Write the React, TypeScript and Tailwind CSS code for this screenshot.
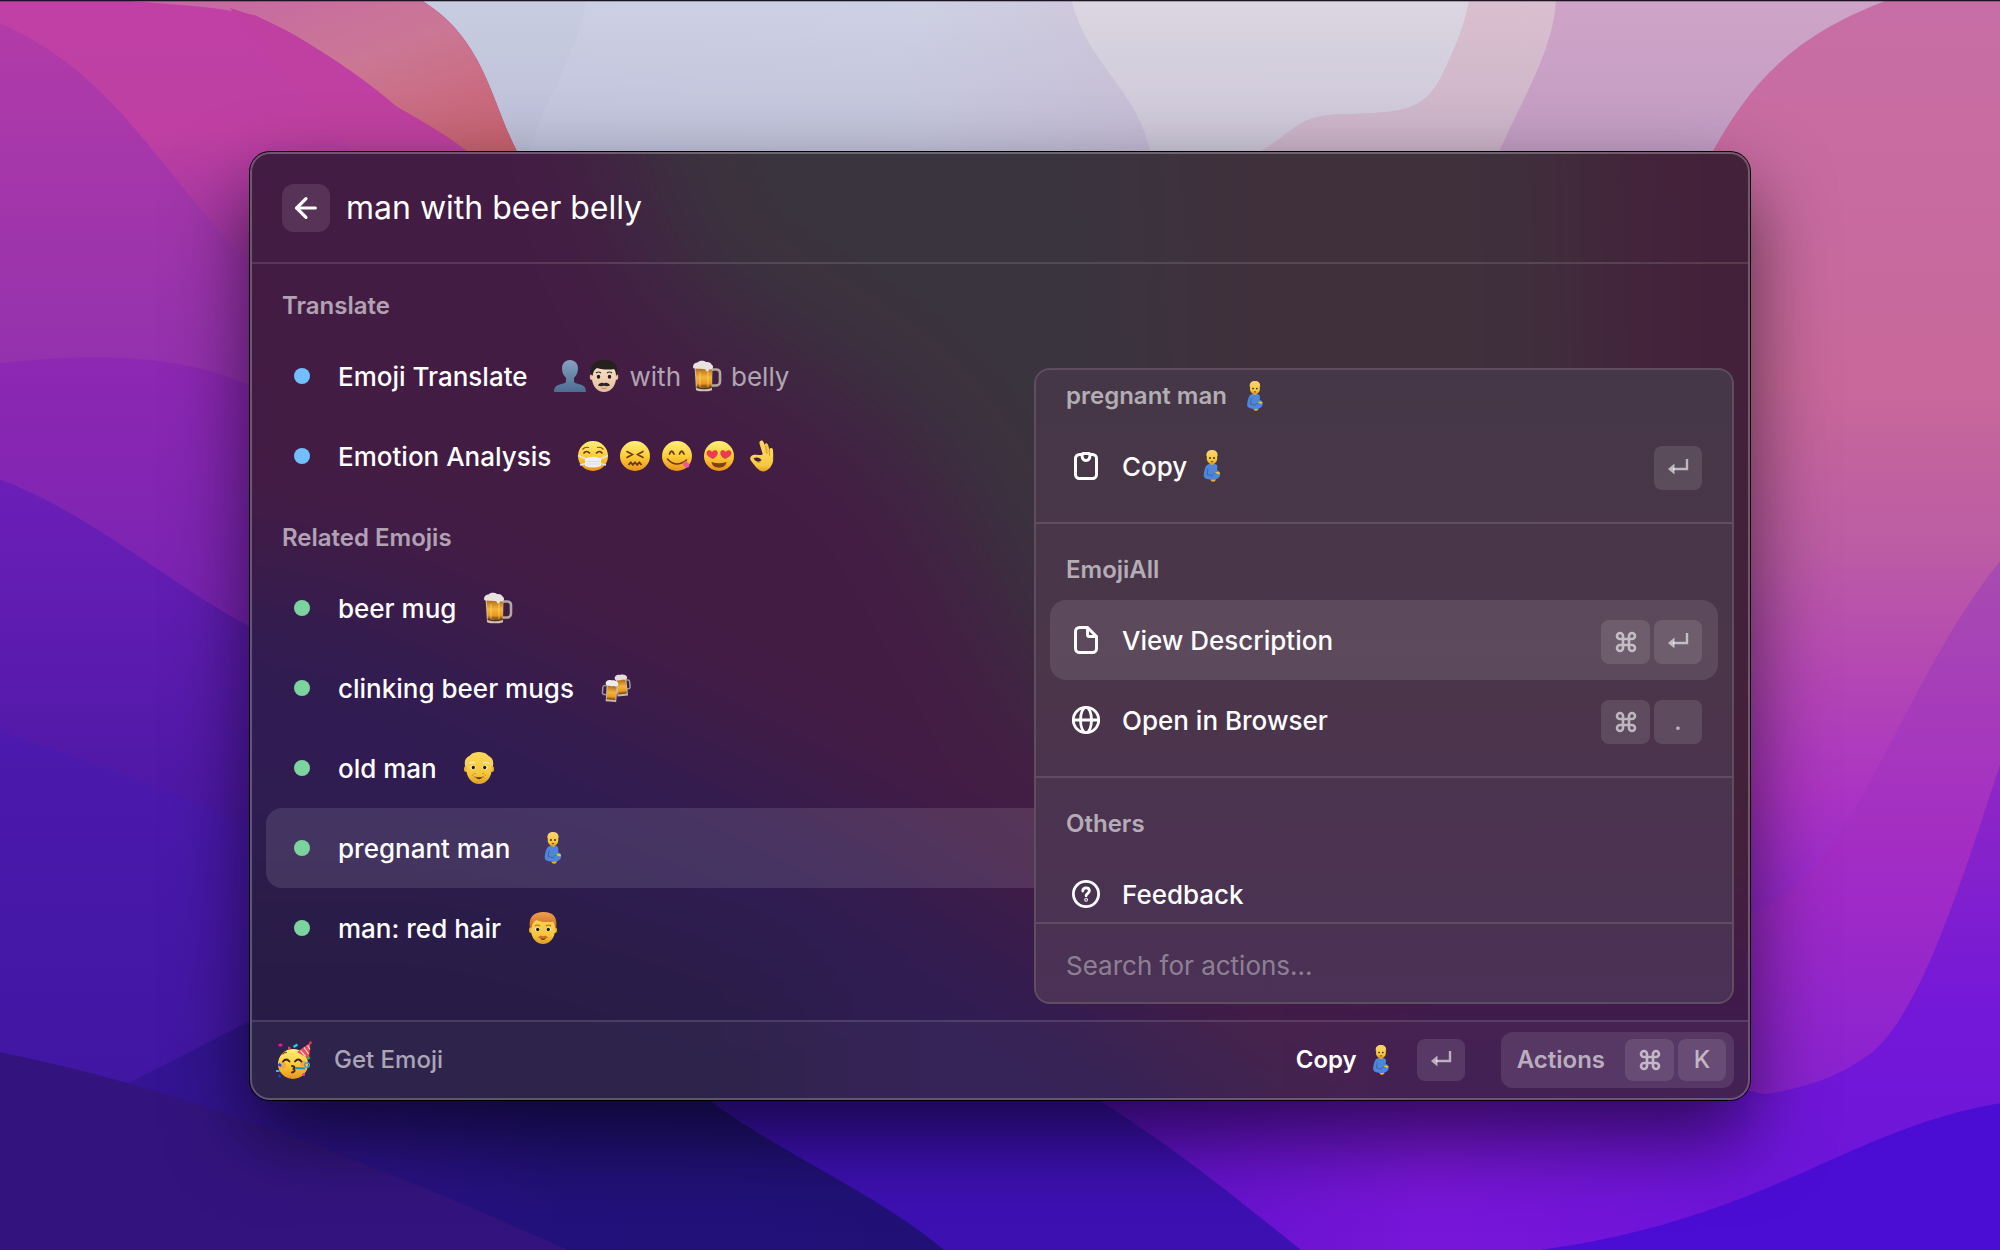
import { useState } from 'react';
import type { ReactNode } from 'react';
import { ArrowLeft, Command } from 'lucide-react';

/* ---------- Emojis ---------- */

type EmojiProps = { className?: string };

const EMOJI = 'w-8 h-8 shrink-0';

function Gradients() {
  return (
    <svg className="absolute w-0 h-0" aria-hidden="true">
      <defs>
        <linearGradient id="face" x1="0" y1="0" x2="0" y2="1">
          <stop offset="0" stopColor="#fff07a" />
          <stop offset="0.55" stopColor="#fcc935" />
          <stop offset="1" stopColor="#e8921c" />
        </linearGradient>
        <linearGradient id="skin" x1="0" y1="0" x2="0" y2="1">
          <stop offset="0" stopColor="#fbd95c" />
          <stop offset="0.7" stopColor="#f5c63c" />
          <stop offset="1" stopColor="#dc9c22" />
        </linearGradient>
        <linearGradient id="paleSkin" x1="0" y1="0" x2="0" y2="1">
          <stop offset="0" stopColor="#fbe6d2" />
          <stop offset="1" stopColor="#e6bd9c" />
        </linearGradient>
        <linearGradient id="bust" x1="0" y1="0" x2="0" y2="1">
          <stop offset="0" stopColor="#84a2be" />
          <stop offset="1" stopColor="#4c6c92" />
        </linearGradient>
        <linearGradient id="beer" x1="0" y1="0" x2="0" y2="1">
          <stop offset="0" stopColor="#a8621c" />
          <stop offset="0.5" stopColor="#f4b437" />
          <stop offset="0.8" stopColor="#e8981f" />
          <stop offset="1" stopColor="#6f3a0e" />
        </linearGradient>
        <linearGradient id="ginger" x1="0" y1="0" x2="0" y2="1">
          <stop offset="0" stopColor="#f0a050" />
          <stop offset="1" stopColor="#c96a1e" />
        </linearGradient>
      </defs>
    </svg>
  );
}

function Bust({ className = EMOJI }: EmojiProps) {
  return (
    <svg viewBox="0 0 32 32" className={className} aria-label="bust in silhouette">
      <path d="M16 0c5 0 8 3.600 8 8.500 0 4-1.600 7.400-4 9.300v3.400c0 1.600 1.500 2.100 4.500 2.900C29.500 25.400 32 27 32 32H0c0-5 2.500-6.600 7.500-7.900 3-.8 4.500-1.300 4.500-2.900v-3.400c-2.400-1.900-4-5.300-4-9.300C8 3.600 11 0 16 0z" fill="url(#bust)" />
    </svg>
  );
}

function MustacheMan({ className = EMOJI }: EmojiProps) {
  return (
    <svg viewBox="0 0 32 32" className={className} aria-label="man: light skin tone">
      <ellipse cx="3.800" cy="17" rx="2" ry="3" fill="#e9c4a6" />
      <ellipse cx="28.200" cy="17" rx="2" ry="3" fill="#e9c4a6" />
      <path d="M4 11C4 4 9 2 16 2s12 2 12 9v7c0 8-5.500 14-12 14S4 26 4 18z" fill="url(#paleSkin)" />
      <path d="M2.500 14C1.500 5 7 0 16.500 0S30.500 5 29.500 14l-1.500 2c0-3-.5-5-2-7-3 .8-11 1-17-1-2.500 1.500-4 4-4.500 8z" fill="#26201f" />
      <path d="M8 13q2.500-2 5 0M19 13q2.500-2 5 0" stroke="#3b2a22" strokeWidth="1.200" fill="none" />
      <ellipse cx="10.500" cy="16.800" rx="1.700" ry="2" fill="#211a18" />
      <ellipse cx="21.500" cy="16.800" rx="1.700" ry="2" fill="#211a18" />
      <path d="M10 25.500c1-2.500 4-3.500 6-2.200 2-1.300 5-.3 6 2.200-2 1-4.200.8-6 .3-1.800.5-4 .7-6-.3z" fill="#2c2423" />
      <path d="M13.500 28q2.500 1 5 0" stroke="#b98468" strokeWidth="1" fill="none" />
    </svg>
  );
}

function BeerMug({ className = EMOJI }: EmojiProps) {
  return (
    <svg viewBox="0 0 32 32" className={className} aria-label="beer mug">
      <path d="M21 9.500h4.500a3.500 3.500 0 0 1 3.500 3.500v8.500a4 4 0 0 1-4 4h-4" fill="none" stroke="#b3a89d" strokeWidth="2.600" />
      <path d="M3.500 6h18l-.5 24c0 1.800-16 1.800-16 0z" fill="#cdbfb2" />
      <path d="M4.500 7h16.500l-.3 19.500c0 1.500-14.900 1.500-14.900 0z" fill="url(#beer)" />
      <path d="M9 12v15M17 11v16" stroke="#ffe08a" strokeWidth="1" opacity="0.600" />
      <path d="M5.500 26.500q7.500 2.500 15.300 0v1.500q-8 2.500-15.300 0z" fill="#5c2f10" />
      <path d="M2 7c0-3 2-4.500 4.500-4.500C8 .3 13 .2 15 2c3-.4 5 .8 5.500 2.500 2 .8 2 3.500.5 4.500-1 .8-2.500.5-3 .2-.5 2.800-3 3-3.500 0C12 9 7 9 4.500 8.500 3 8.500 2 8 2 7z" fill="#e9e2e0" />
    </svg>
  );
}

function BeerMugs({ className = EMOJI }: EmojiProps) {
  return (
    <svg viewBox="0 0 32 32" className={className} aria-label="clinking beer mugs">
      <g transform="rotate(-6 22 14)">
        <path d="M26.500 8.500H28a2 2 0 0 1 2 2v5a2 2 0 0 1-2 2h-1.500" fill="none" stroke="#9d9591" strokeWidth="1.500" />
        <path d="M16.500 6h10.500v18H16.500z" fill="#c9bab0" />
        <path d="M17.500 7h8.500v15h-8.500z" fill="url(#beer)" />
        <path d="M15.500 6c0-3 3.500-4 5.500-3.200 3-.8 7 .6 7 3.200 0 1.700-2.600 2.500-4.500 1.700-2.500.8-8 .8-8-1.700z" fill="#e6dedb" />
      </g>
      <g transform="rotate(5 10 20)">
        <path d="M6 14H4.500a2 2 0 0 0-2 2v5a2 2 0 0 0 2 2H6.500" fill="none" stroke="#9d9591" strokeWidth="1.500" />
        <path d="M6 12h11v17.500H6.500z" fill="#c9bab0" />
        <path d="M7.200 13h8.800v14.500H7.200z" fill="url(#beer)" />
        <path d="M5 12c-.6-3 2.600-4.500 5.400-3.800 3.600-.8 7.900.8 7.100 3.800 0 1.700-2.600 2.500-4.500 1.700-2.600.8-8 .8-8-1.700z" fill="#f0eae8" />
      </g>
    </svg>
  );
}

function MaskFace({ className = EMOJI }: EmojiProps) {
  return (
    <svg viewBox="0 0 32 32" className={className} aria-label="face with medical mask">
      <circle cx="16" cy="16" r="15" fill="url(#face)" />
      <path d="M5.500 9.500Q8 6.500 12 7.500M26.500 9.500Q24 6.500 20 7.500" stroke="#8a5310" strokeWidth="1.200" fill="none" />
      <path d="M6.500 13.500Q9.500 9.500 13 13.500M19 13.500q3.500-4 6.500 0" stroke="#6b3a0a" strokeWidth="1.600" fill="none" />
      <path d="M1 15.500l8 3.500M31 15.500L23 19M3 25l6-1.500M29 25l-6-1.500" stroke="#e4e4ea" strokeWidth="1.500" />
      <path d="M8 18.500q8-3.500 16 0v7.500q-8 3-16 0z" fill="#eef0f6" />
      <path d="M9 21.500h14M9 24h14" stroke="#cdd0da" strokeWidth="0.600" />
    </svg>
  );
}

function ConfoundedFace({ className = EMOJI }: EmojiProps) {
  return (
    <svg viewBox="0 0 32 32" className={className} aria-label="confounded face">
      <circle cx="16" cy="16" r="15" fill="url(#face)" />
      <path d="M8 11.500l5.500 3L8 17.500M24 11.500l-5.500 3 5.500 3" stroke="#6b3a0a" strokeWidth="1.600" fill="none" strokeLinecap="round" />
      <path d="M9.500 25l2.200-2.800 2.100 2.800 2.200-2.800 2.200 2.800 2.100-2.800 2.200 2.800" stroke="#6b3a0a" strokeWidth="1.800" fill="none" strokeLinejoin="round" />
    </svg>
  );
}

function YumFace({ className = EMOJI }: EmojiProps) {
  return (
    <svg viewBox="0 0 32 32" className={className} aria-label="face savoring food">
      <circle cx="16" cy="16" r="15" fill="url(#face)" />
      <path d="M8.500 14q2-5.500 4.500 0M18.500 14q2-5.500 4.500 0" stroke="#6b3a0a" strokeWidth="1.800" fill="none" strokeLinecap="round" />
      <path d="M6.500 19Q15 28.500 25.500 20" stroke="#6b3a0a" strokeWidth="1.600" fill="none" strokeLinecap="round" />
      <path d="M22 22.500q3.500-2 5 .5c2 1.500 2 4-.5 4.500s-5-2-4.500-5z" fill="#f1559b" />
    </svg>
  );
}

function HeartEyesFace({ className = EMOJI }: EmojiProps) {
  return (
    <svg viewBox="0 0 32 32" className={className} aria-label="smiling face with heart-eyes">
      <circle cx="16" cy="16" r="15" fill="url(#face)" />
      <path d="M10 19C5 17 2.500 14 4 11.500c1.300-2 4-1.500 5 .5 1.500-2 4.500-2.500 5.500-.3C15.500 14 13.500 17 10 19z" fill="#ee3b4d" />
      <path d="M22 19c5-2 7.500-5 6-7.500-1.300-2-4-1.500-5 .5-1.500-2-4.500-2.500-5.500-.3-1 2.300 1 5.300 4.500 7.300z" fill="#ee3b4d" />
      <path d="M8.500 22q7.500 2.500 15 0c-.5 3.800-3.700 5.700-7.500 5.700s-7-1.900-7.500-5.700z" fill="#7a4212" />
    </svg>
  );
}

function OkHand({ className = EMOJI }: EmojiProps) {
  return (
    <svg viewBox="0 0 32 32" className={className} aria-label="OK hand">
      <path d="M18 15L14.500 3.500C14 .5 17.500-.5 18.500 2L23.500 14z" fill="#fbd65a" />
      <path d="M20.500 14L19.500 5.500c-.2-2.800 3-3.200 3.600-.6L26.500 16z" fill="#f5c542" />
      <path d="M23.500 15L24.500 9.500c.6-2.200 3.400-1.700 3.500.6.2 4 .6 7.500-.4 11z" fill="#fbd65a" />
      <path d="M16.500 15c3-2.500 8.500-2.500 11 .5 1.200 3 .8 6.500-.8 9.500-1.500 3-4 5.500-7.700 6.500-2.500.3-4.500-1-6-2.500-2.500-2-5-5.500-7.300-8.700C4.200 18 6 15 9 14.800c3-.3 5 .2 7.500.2z" fill="url(#skin)" />
      <path d="M8.500 18.300c3-1.600 6.500-1 8 1.800-2.300 2.800-6 2.100-8-1.800z" fill="#451d44" />
      <path d="M16.500 20q-1 3-4 3" stroke="#d89a22" strokeWidth="1" fill="none" />
      <path d="M20.500 6l1.500 8M24.500 10v6" stroke="#d3921f" strokeWidth="0.800" fill="none" />
    </svg>
  );
}

function OldMan({ className = EMOJI }: EmojiProps) {
  return (
    <svg viewBox="0 0 32 32" className={className} aria-label="old man">
      <path d="M3 17C0 9 3 5 7 4l-2 10zM29 17c3-8 0-12-4-13l2 10z" fill="#f0d078" />
      <ellipse cx="3" cy="17" rx="2" ry="3" fill="#e9b535" />
      <ellipse cx="29" cy="17" rx="2" ry="3" fill="#e9b535" />
      <path d="M3.500 13C3.500 4 9 0 16 0s12.500 4 12.500 13v5c0 8-6 14-12.500 14S3.500 26 3.500 18z" fill="url(#skin)" />
      <path d="M6 11.500q3-2 6-.5M26 11.500q-3-2-6-.5" stroke="#fff0bd" strokeWidth="1.200" fill="none" />
      <ellipse cx="10" cy="15.500" rx="2.600" ry="2" fill="#fff" />
      <ellipse cx="22" cy="15.500" rx="2.600" ry="2" fill="#fff" />
      <circle cx="10.300" cy="15.500" r="1.700" fill="#211a18" />
      <circle cx="21.700" cy="15.500" r="1.700" fill="#211a18" />
      <path d="M9 24q2-3.500 4-2.500M23 24q-2-3.500-4-2.500" stroke="#d29a25" strokeWidth="1" fill="none" />
      <path d="M11 25q5 1.300 10 0" stroke="#a8721a" strokeWidth="1" fill="none" />
      <path d="M13 25.500h6q-.8 1.800-3 1.800t-3-1.800z" fill="#5b2f0c" />
    </svg>
  );
}

function RedHairMan({ className = EMOJI }: EmojiProps) {
  return (
    <svg viewBox="0 0 32 32" className={className} aria-label="man: red hair">
      <ellipse cx="4" cy="18" rx="2" ry="3" fill="#e9b535" />
      <ellipse cx="28" cy="18" rx="2" ry="3" fill="#e9b535" />
      <path d="M4 11C4 4 9 2 16 2s12 2 12 9v7c0 8-5.500 14-12 14S4 26 4 18z" fill="url(#skin)" />
      <path d="M2.800 15C1.500 5 7 0 16.500 0S30.500 5 29.200 15l-1.200 1c0-3-.5-4.500-2-6.500-4 1-11 1-16.500-1.500-3 1.500-4.500 4-5 8z" fill="url(#ginger)" />
      <path d="M8 14q2.500-2 5 0M19 14q2.500-2 5 0" stroke="#b5651d" strokeWidth="1.200" fill="none" />
      <ellipse cx="10.500" cy="17.500" rx="2.300" ry="1.900" fill="#fff" />
      <ellipse cx="21.500" cy="17.500" rx="2.300" ry="1.900" fill="#fff" />
      <circle cx="10.700" cy="17.500" r="1.700" fill="#211a18" />
      <circle cx="21.300" cy="17.500" r="1.700" fill="#211a18" />
      <path d="M11 25.500c1-1.800 3.400-2.200 5-1.200 1.600-1 4-.6 5 1.200-1.800.8-3.400.6-5 .2-1.600.4-3.200.6-5-.2z" fill="#cb6f22" />
      <path d="M13 26.200h6q-1 1.800-3 1.800t-3-1.800z" fill="#6b3a10" />
    </svg>
  );
}

function PregnantMan({ className = EMOJI }: EmojiProps) {
  return (
    <svg viewBox="0 0 32 32" className={className} aria-label="pregnant man">
      <path d="M15.500 29.500c1-1.500 3.500-1.800 5-.8.800 1.200-.3 3-2.300 3-1.500 0-2.700-.7-2.700-2.200z" fill="#e8ab2c" />
      <path d="M12 15c1.500-1 2-1 2.500-1.500h5c.8.800 2.500.8 2.800 2.500.2 1.300 0 2.700-.3 4 2.800 1.300 3.800 3.300 3 5.800-1 3-4.500 4.200-7.500 4-3.300.2-7.500-.8-8.500-2.500-.8-2.500.3-7 1.200-9.500.4-1.200 1-2.200 1.800-2.800z" fill="#4f86d8" />
      <path d="M13 18.500l-.8 6 5.300 1.500M17 25.500c2-2.500 4.500-3 7-1.500" stroke="#3a66b0" strokeWidth="1" fill="none" />
      <path d="M19.800 23q2.700-2 5-.5.500 1.500-1 2z" fill="#f2bf38" />
      <path d="M15 11h4v3q-2 2-4 0z" fill="#dba22c" />
      <path d="M11.800 5c0-3.500 2-4.500 5.200-4.500S22.200 1.500 22.200 5v3.500c0 3.500-2.500 5.500-5.200 5.500s-5.200-2-5.200-5.500z" fill="url(#skin)" />
      <path d="M11.500 6.500C11 2 13.500 0 17 0s6 2 5.500 6.500C21.900 5.500 21.800 5 21.300 4c-3 .5-5.800.3-7.600 0-1 .5-1.600 1.300-2.200 2.500z" fill="#f8d066" />
      <circle cx="15" cy="8" r="0.900" fill="#2c2018" />
      <circle cx="19" cy="8" r="0.900" fill="#2c2018" />
      <path d="M15.900 11.600h2.200" stroke="#7a4212" strokeWidth="1" />
    </svg>
  );
}

function PartyFace({ className = EMOJI }: EmojiProps) {
  return (
    <svg viewBox="0 0 36 38" className={className} aria-label="partying face">
      <circle cx="17" cy="23" r="15" fill="url(#face)" />
      <circle cx="6.500" cy="24" r="3.500" fill="#f58a5c" opacity="0.600" />
      <circle cx="27" cy="22.500" r="3" fill="#f58a5c" opacity="0.600" />
      <path d="M21 11L34.500 1.500 33 18z" fill="#ee4b57" />
      <path d="M24.500 9.500l5 6M28 6.500l4.500 6.500M31.500 4.500l2.500 4" stroke="#fbd3d6" strokeWidth="1.300" />
      <circle cx="34.500" cy="1.800" r="1.500" fill="#e0343f" />
      <path d="M6.500 13.500Q8 11 11 11.500" stroke="#8a5310" strokeWidth="1.200" fill="none" />
      <path d="M7 20.500q3.200-4 6.500 0M19 20.500q3.200-4 6.500 0" stroke="#3d2408" strokeWidth="1.800" fill="none" strokeLinecap="round" />
      <path d="M16 25q4 .5 1.500 3 3 2-1.500 3.500" stroke="#4b2a08" strokeWidth="1.900" fill="none" strokeLinecap="round" />
      <path d="M19 27l10 .5" stroke="#1f8fc4" strokeWidth="2" />
      <circle cx="31" cy="24" r="2.300" fill="none" stroke="#3fa2d8" strokeWidth="1.500" />
      <ellipse cx="4.500" cy="4" rx="2.200" ry="1.500" fill="#f312a0" />
      <path d="M17.500 6l4-2.500" stroke="#1ad0e0" strokeWidth="2.600" />
      <path d="M12 7h2.500" stroke="#ef3a4a" strokeWidth="2.600" />
      <path d="M2.500 23l2.500 2" stroke="#1746e0" strokeWidth="2.400" />
      <path d="M0 30h3.500" stroke="#29bce8" strokeWidth="2" />
      <path d="M2.500 34l2 2.500" stroke="#1746e0" strokeWidth="2" />
      <path d="M31 18l3-1.500" stroke="#28b34b" strokeWidth="2" />
      <circle cx="27.500" cy="33.500" r="1.500" fill="#ee3aa8" />
    </svg>
  );
}

/* ---------- Action icons ---------- */

const ICON = 'w-8 h-8 shrink-0';
const stroke = { fill: 'none', stroke: 'currentColor', strokeWidth: 3, strokeLinecap: 'round', strokeLinejoin: 'round' } as const;

function ClipboardIcon() {
  return (
    <svg viewBox="0 0 32 32" className={ICON} {...stroke}>
      <path d="M12 4.500H9.500a4 4 0 0 0-4 4v16a4 4 0 0 0 4 4h13a4 4 0 0 0 4-4v-16a4 4 0 0 0-4-4H20" />
      <path d="M12 5Q12 3.500 13.500 3.500h5Q20 3.500 20 5c0 3.500-1.500 5.500-4 5.500S12 8.500 12 5z" />
    </svg>
  );
}

function DocumentIcon() {
  return (
    <svg viewBox="0 0 32 32" className={ICON} {...stroke}>
      <path d="M17.500 3.500h-8a4 4 0 0 0-4 4v17a4 4 0 0 0 4 4h13a4 4 0 0 0 4-4v-12z" />
      <path d="M17.500 4v6.500a2 2 0 0 0 2 2H26" />
    </svg>
  );
}

function GlobeIcon() {
  return (
    <svg viewBox="0 0 32 32" className={ICON} {...stroke} strokeWidth={2.8}>
      <circle cx="16" cy="16" r="12.700" />
      <ellipse cx="16" cy="16" rx="5.500" ry="12.700" />
      <path d="M3.500 16h25" />
    </svg>
  );
}

function HelpIcon() {
  return (
    <svg viewBox="0 0 32 32" className={ICON} {...stroke} strokeWidth={2.8}>
      <circle cx="16" cy="16" r="12.600" />
      <path d="M12.800 13c0-2 1.400-3.200 3.300-3.200s3.300 1.200 3.300 3c0 2.400-3.300 2.600-3.300 5" />
      <circle cx="16.100" cy="21.800" r="0.500" />
    </svg>
  );
}

function ReturnIcon() {
  return (
    <svg viewBox="0 0 24 24" className="w-6 h-6">
      <path d="M7 13h14V3" fill="none" stroke="currentColor" strokeWidth="2.400" />
      <path d="M2 13l6.500-5.500v11z" fill="currentColor" />
    </svg>
  );
}

/* ---------- Shared pieces ---------- */

type KeyName = 'cmd' | 'return' | '.' | 'K';

function Key({ name, short = false }: { name: KeyName; short?: boolean }) {
  return (
    <kbd className={`flex items-center justify-center rounded-lg bg-white/11 font-[Inter,sans-serif] text-2xl font-medium text-white/60 ${name === 'cmd' ? 'w-[49px]' : 'w-12'} ${short ? 'h-[42px]' : 'h-11'}`}>
      {name === 'cmd' && <Command className="w-6 h-6" strokeWidth={2.6} />}
      {name === 'return' && <ReturnIcon />}
      {name !== 'cmd' && name !== 'return' && name}
    </kbd>
  );
}

function ListItem({ color, title, selected, onSelect, children }: {
  color: string;
  title: string;
  selected: boolean;
  onSelect: () => void;
  children: ReactNode;
}) {
  return (
    <li>
      <button
        type="button"
        onClick={onSelect}
        className={`flex h-20 w-full items-center rounded-2xl px-7 text-left ${selected ? 'bg-white/11' : ''}`}
      >
        <span className={`w-4 h-4 mr-7 rounded-full ${color}`} />
        <span className="mr-[26px] font-medium text-white">{title}</span>
        <span className="flex items-center gap-2.5 text-white/60">{children}</span>
      </button>
    </li>
  );
}

function ActionItem({ icon, keys, active = false, children }: {
  icon: ReactNode;
  keys: KeyName[];
  active?: boolean;
  children: ReactNode;
}) {
  return (
    <li className="px-3.5">
      <button type="button" className={`flex h-20 w-full items-center gap-5 rounded-2xl pl-5 pr-4 text-left font-medium text-white ${active ? 'bg-white/10' : ''}`}>
        {icon}
        <span className="flex items-center gap-2">{children}</span>
        <span className="ml-auto flex gap-1 pt-1">
          {keys.map((k) => <Key key={k} name={k} />)}
        </span>
      </button>
    </li>
  );
}

function ActionSection({ title, children }: { title: ReactNode; children: ReactNode }) {
  return (
    <section className="border-t-2 border-white/12 pb-4 first:border-t-0">
      <h3 className="flex h-[76px] items-center gap-3 px-[30px] pt-4 text-2xl font-semibold text-white/60">{title}</h3>
      <ul>{children}</ul>
    </section>
  );
}

function Wallpaper() {
  return (
    <svg viewBox="0 0 1568 980" preserveAspectRatio="none" className="absolute inset-0 h-full w-full" aria-hidden="true">
      <defs>
        <linearGradient id="sky" x1="0" y1="0" x2="1" y2="0">
          <stop offset="0.250" stopColor="#cbd0e4" />
          <stop offset="0.450" stopColor="#ced1e4" />
          <stop offset="0.550" stopColor="#cfc9dc" />
          <stop offset="1" stopColor="#cf9fcb" />
        </linearGradient>
        <linearGradient id="skyShade" x1="0" y1="0" x2="0" y2="1">
          <stop offset="0" stopColor="#8f87b5" stopOpacity="0" />
          <stop offset="0.120" stopColor="#8f87b5" stopOpacity="0.200" />
        </linearGradient>
        <linearGradient id="leftHill" x1="0" y1="0" x2="0" y2="1">
          <stop offset="0" stopColor="#c040a6" />
          <stop offset="0.120" stopColor="#bf40a2" />
          <stop offset="0.300" stopColor="#8c2fa6" />
          <stop offset="1" stopColor="#5c1fa0" />
        </linearGradient>
        <linearGradient id="rim" x1="0" y1="0" x2="1" y2="1">
          <stop offset="0" stopColor="#c565a8" />
          <stop offset="0.500" stopColor="#cb7795" />
          <stop offset="1" stopColor="#c8606c" />
        </linearGradient>
        <linearGradient id="leftFold" x1="0" y1="0" x2="0" y2="1">
          <stop offset="0" stopColor="#b23ba8" />
          <stop offset="1" stopColor="#9030ae" />
        </linearGradient>
        <linearGradient id="violet" x1="0" y1="0" x2="0" y2="1">
          <stop offset="0" stopColor="#8d28b2" />
          <stop offset="1" stopColor="#6a1fb4" />
        </linearGradient>
        <linearGradient id="indigo" x1="0" y1="0" x2="0" y2="1">
          <stop offset="0" stopColor="#6c1fb8" />
          <stop offset="1" stopColor="#4a17a4" />
        </linearGradient>
        <linearGradient id="deep" x1="0" y1="0" x2="0" y2="1">
          <stop offset="0" stopColor="#4d19ae" />
          <stop offset="1" stopColor="#3a159c" />
        </linearGradient>
        <linearGradient id="night" x1="0" y1="0" x2="1" y2="0">
          <stop offset="0" stopColor="#3c159c" />
          <stop offset="0.400" stopColor="#22117a" />
          <stop offset="1" stopColor="#1f1172" />
        </linearGradient>
        <linearGradient id="rightHill" x1="0" y1="0" x2="0" y2="1">
          <stop offset="0" stopColor="#c86ea6" />
          <stop offset="0.350" stopColor="#c8689a" />
          <stop offset="0.500" stopColor="#bc5ca4" />
          <stop offset="0.720" stopColor="#ac34c2" />
          <stop offset="0.860" stopColor="#9024d2" />
          <stop offset="1" stopColor="#6a14da" />
        </linearGradient>
        <linearGradient id="rightFold" x1="0" y1="0" x2="0" y2="1">
          <stop offset="0" stopColor="#a84cb0" />
          <stop offset="0.500" stopColor="#a42cc4" />
          <stop offset="1" stopColor="#8420d4" />
        </linearGradient>
        <linearGradient id="lowFold" x1="0" y1="0" x2="0" y2="1">
          <stop offset="0" stopColor="#9028c4" />
          <stop offset="0.500" stopColor="#7418d8" />
          <stop offset="1" stopColor="#6a14da" />
        </linearGradient>
        <linearGradient id="bottomViolet" x1="0" y1="0" x2="1" y2="0">
          <stop offset="0" stopColor="#5c10c8" />
          <stop offset="0.500" stopColor="#7816d8" />
          <stop offset="1" stopColor="#6c14da" />
        </linearGradient>
      </defs>
      <rect width="1568" height="980" fill="url(#sky)" />
      <path d="M460 0c-10 50-35 80-45 120h-115V0z" fill="#c2c8dd" opacity="0.400" />
      <path d="M840 0c12 50 52 70 62 120h85c25-14 28-28 58-30 50-2 70 0 85-30 12-24 18-40 22-60z" fill="#dbd6e1" />
      <path d="M985 120c28-14 30-28 60-30 50-2 70 0 85-30 12-24 18-40 22-60h68c-2 40-28 80-45 120z" fill="#dabfce" />
      <path d="M1220 0c-2 40-28 80-45 120h170c30-60 70-90 130-120z" fill="#cfa3c8" />
      <rect width="1568" height="980" fill="url(#skyShade)" />

      <path d="M0 0h330c50 30 55 80 76 120v740H0z" fill="url(#leftHill)" />
      <path d="M90 0h240c50 30 55 80 76 120h-60C320 85 260 40 200 12 170 5 130 3 90 0z" fill="url(#rim)" />
      <path d="M180 6c30 10 60 22 80 44 15 20 25 20 45 30 20 12 45 25 63 40h-90z" fill="#bf40a0" />
      <path d="M0 18c90 40 120 110 197 190v110H0z" fill="url(#leftFold)" />
      <path d="M0 285c80-10 150-5 197 18v330H0z" fill="url(#violet)" />
      <path d="M0 376c70 26 130 80 197 116v170H0z" fill="url(#indigo)" />
      <path d="M0 573c70 25 130 45 220 82v322H0z" fill="url(#deep)" />
      <path d="M197 800h900v180H0V900z" fill="url(#night)" />
      <path d="M0 825c150 30 300 90 445 155H0z" fill="#33147f" />
      <path d="M540 850c60 50 140 80 200 130h320L840 850z" fill="#3d10b2" />

      <path d="M1480 0c-80 30-110 70-138 120v740h226V0z" fill="url(#rightHill)" />
      <path d="M1568 440c-50 60-90 160-130 220-20 30-45 50-75 60v170h205z" fill="url(#rightFold)" />
      <path d="M1568 600c-30 90-60 190-100 225-30 22-60 32-120 37v118h220z" fill="url(#lowFold)" />
      <path d="M840 850c70 40 130 90 180 130h380V862l-50-12z" fill="url(#bottomViolet)" />
      <path d="M1568 600c-30 90-60 190-100 225-30 22-55 32-97 37v118h197z" fill="url(#lowFold)" />
      <path d="M1568 865c-120 20-180 90-360 115h360z" fill="#4b0dd4" />
      <rect width="1568" height="1" fill="#1c1420" />
    </svg>
  );
}

/* Soft tint behind the panel, the wallpaper seen through dark glass */
function Glass() {
  return (
    <svg viewBox="197 119 1174 742" preserveAspectRatio="none" className="absolute inset-0 h-full w-full" aria-hidden="true">
      <defs>
        <filter id="soft" x="-20%" y="-20%" width="140%" height="140%" colorInterpolationFilters="sRGB">
          <feGaussianBlur stdDeviation="50" />
        </filter>
      </defs>
      <rect x="197" y="119" width="1174" height="742" fill="#411d42" />
      <g filter="url(#soft)">
        <rect x="-100" y="-150" width="1800" height="1300" fill="#431c44" />
        <path d="M440 -100h600l-20 400 20 340-200-60-130-240L520 220z" fill="#3a343e" />
        <path d="M900 -100h340l20 620-330 60z" fill="#3f303c" />
        <path d="M1240 -100h350v800h-300z" fill="#44213a" />
        <path d="M0 420l280 40 200 90 200 100 300 200 60 180H0z" fill="#301c52" />
        <path d="M0 680h360l280 90v250H0z" fill="#281c46" />
        <path d="M1040 780h700v300h-700z" fill="#3d1a50" />
      </g>
    </svg>
  );
}

/* ---------- Page ---------- */

const RELATED = [
  { title: 'beer mug', emoji: <BeerMug /> },
  { title: 'clinking beer mugs', emoji: <BeerMugs /> },
  { title: 'old man', emoji: <OldMan /> },
  { title: 'pregnant man', emoji: <PregnantMan /> },
  { title: 'man: red hair', emoji: <RedHairMan /> },
];

export default function App() {
  const [query, setQuery] = useState('man with beer belly');
  const [actionQuery, setActionQuery] = useState('');
  const [selected, setSelected] = useState('pregnant man');

  return (
    <div className="relative flex min-h-screen items-center justify-center overflow-hidden pt-0.5 font-[Inter,sans-serif] text-[26px]">
      <Gradients />
      <Wallpaper />

      <main className="relative flex w-3/4 flex-col overflow-hidden rounded-[20px] shadow-[0_0_0_1px_#000,0_36px_80px_rgba(0,0,0,0.6)]">
        <Glass />

        <div className="relative flex flex-col rounded-[20px] border-2 border-white/25">
          {/* Search bar */}
          <header className="flex h-[110px] items-center gap-4 border-b-2 border-white/12 px-[30px]">
            <button type="button" aria-label="Back" className="flex w-12 h-12 items-center justify-center rounded-xl bg-white/10 text-white">
              <ArrowLeft className="w-8 h-8" strokeWidth={2.4} />
            </button>
            <input
              aria-label="Search"
              value={query}
              onChange={(e) => setQuery(e.target.value)}
              className="min-w-0 flex-1 bg-transparent text-[32px] text-white outline-none"
            />
          </header>

          {/* Results */}
          <div className="relative px-3.5 pb-13">
            <h2 className="flex h-18 items-center px-4 pt-3 text-2xl font-semibold text-white/60">Translate</h2>
            <ul>
              <ListItem color="bg-[#72bffc]" title="Emoji Translate" selected={selected === 'translate'} onSelect={() => setSelected('translate')}>
                <span className="flex items-center gap-0.5"><Bust /><MustacheMan /></span>
                <span>with</span>
                <span className="flex items-center gap-2"><BeerMug />belly</span>
              </ListItem>
              <ListItem color="bg-[#72bffc]" title="Emotion Analysis" selected={selected === 'emotion'} onSelect={() => setSelected('emotion')}>
                <MaskFace />
                <ConfoundedFace />
                <YumFace />
                <HeartEyesFace />
                <OkHand />
              </ListItem>
            </ul>
            <h2 className="flex h-18 items-center px-4 pt-3 text-2xl font-semibold text-white/60">Related Emojis</h2>
            <ul>
              {RELATED.map((r) => (
                <ListItem key={r.title} color="bg-[#7dd3a0]" title={r.title} selected={selected === r.title} onSelect={() => setSelected(r.title)}>
                  {r.emoji}
                </ListItem>
              ))}
            </ul>

            {/* Actions menu */}
            <div className="absolute right-3.5 bottom-4 w-[700px] overflow-hidden rounded-2xl border-2 border-white/12 bg-[#4a3549]">
              <div className="absolute inset-0 bg-linear-to-b from-[#453747] via-[#4b354a] to-[#4a3156]" />
              <div className="relative h-[552px] overflow-hidden">
                <div className="-mt-5">
                  <ActionSection title={<>pregnant man <PregnantMan className="w-[30px] h-[30px]" /></>}>
                    <ActionItem icon={<ClipboardIcon />} keys={['return']}>Copy <PregnantMan /></ActionItem>
                  </ActionSection>
                  <ActionSection title="EmojiAll">
                    <ActionItem icon={<DocumentIcon />} keys={['cmd', 'return']} active>View Description</ActionItem>
                    <ActionItem icon={<GlobeIcon />} keys={['cmd', '.']}>Open in Browser</ActionItem>
                  </ActionSection>
                  <ActionSection title="Others">
                    <ActionItem icon={<HelpIcon />} keys={[]}>Feedback</ActionItem>
                  </ActionSection>
                </div>
              </div>
              <input
                aria-label="Search for actions"
                placeholder="Search for actions..."
                value={actionQuery}
                onChange={(e) => setActionQuery(e.target.value)}
                className="relative block h-20 w-full border-t-2 border-white/12 bg-transparent px-[30px] pt-1 text-white outline-none placeholder:text-white/40"
              />
            </div>
          </div>

          {/* Footer */}
          <footer className="flex h-[78px] items-center rounded-b-[18px] border-t-2 border-white/12 bg-white/3 pr-3.5 pl-6 text-2xl">
            <PartyFace className="w-9 h-[38px]" />
            <span className="ml-[22px] font-medium text-white/60">Get Emoji</span>
            <button type="button" className="ml-auto flex items-center font-semibold text-white">
              Copy
              <PregnantMan className="w-[30px] h-[30px] ml-2 mr-[22px]" />
              <Key name="return" short />
            </button>
            <button type="button" className="ml-9 flex h-14 items-center gap-1 rounded-xl bg-white/10 pr-2 pl-4 font-semibold text-white/60">
              <span className="mr-4">Actions</span>
              <Key name="cmd" short />
              <Key name="K" short />
            </button>
          </footer>
        </div>
      </main>
    </div>
  );
}
